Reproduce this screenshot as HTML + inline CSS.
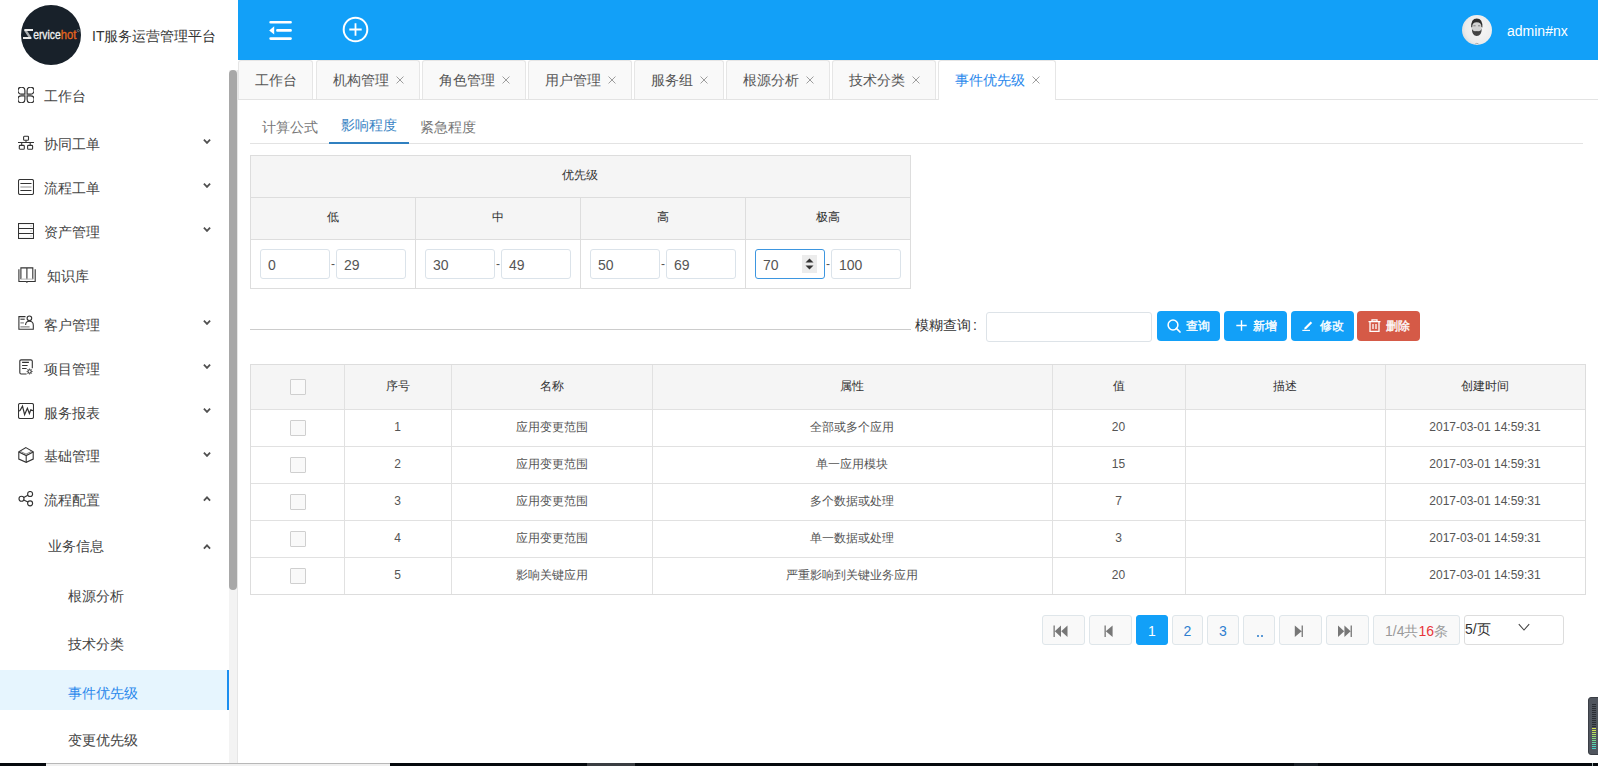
<!DOCTYPE html>
<html><head><meta charset="utf-8">
<style>
*{box-sizing:border-box;margin:0;padding:0}
html,body{width:1598px;height:766px;overflow:hidden;background:#fff;font-family:"Liberation Sans",sans-serif;color:#333}
.a{position:absolute;white-space:nowrap}
#side{position:absolute;left:0;top:0;width:238px;height:766px;background:#fff}
#hdr{position:absolute;left:238px;top:0;width:1360px;height:60px;background:#12a0f8}
.mi{position:absolute;font-size:14px;line-height:14px;color:#444;white-space:nowrap}
.ic{position:absolute;left:18px;width:16px;height:16px}
.chev{position:absolute;left:203px;width:8px;height:6px}
.tab{position:absolute;top:60px;height:39px;background:#f9f9f9;border:1px solid #e6e6e6;border-bottom:none;border-radius:3px 3px 0 0;font-size:14px;line-height:14px;color:#555}
.tab span{position:absolute;top:12px}
.tab .x{position:absolute;top:15px;width:8px;height:8px}
.t12{position:absolute;font-size:12px;line-height:12px;color:#333;white-space:nowrap}
.inp{position:absolute;top:249px;width:70px;height:30px;border:1px solid #dbe3ea;border-radius:3px;background:#fff}
.inp b{position:absolute;left:7px;top:8px;font-weight:normal;font-size:14px;line-height:14px;color:#555}
.dash{position:absolute;top:257px;font-size:12px;line-height:14px;color:#555}
.btn{position:absolute;top:311px;width:63px;height:30px;background:#12a0f8;border-radius:4px;color:#fff;font-size:12px;font-weight:normal;-webkit-text-stroke:0.35px #fff}
.btn span{position:absolute;top:9px;line-height:12px;margin-left:1px}
.hl{position:absolute;left:251px;width:1334px;height:1px;background:#e1e1e1}
.vl{position:absolute;top:365px;width:1px;height:229px;background:#e1e1e1}
.cb{position:absolute;left:290px;width:16px;height:16px;border:1px solid #cfcfcf;background:#f9f9f9;border-radius:1px}
.th{position:absolute;top:380px;font-size:12px;line-height:12px;text-align:center;color:#333}
.td{position:absolute;font-size:12px;line-height:35px;height:37px;text-align:center;color:#555}
.pg{position:absolute;top:615px;height:30px;border:1px solid #dfe6ea;border-radius:3px;background:#f9f9f9;text-align:center;font-size:14px;line-height:30px;color:#555}
</style></head><body>
<div id="side">
  <div class="a" style="left:21px;top:5px;width:60px;height:60px;border-radius:50%;background:#18212a"></div>
  <svg class="a" style="left:22px;top:26px" width="60" height="16" viewBox="0 0 60 16">
    <path d="M2.4 3 H11 V4.9 H2.2 Z M1 11 H9.4 V13 H1 Z" fill="#ececec"/><path d="M2.3 4.9 H5.2 L9.2 11 H6.4 Z" fill="#a9adb0"/>
    <text x="11.2" y="13.2" font-family="Liberation Sans" font-size="13.5" fill="#f0f0f0" stroke="#f0f0f0" stroke-width="0.35" textLength="27.5" lengthAdjust="spacingAndGlyphs">ervice</text>
    <text x="38.8" y="13.2" font-family="Liberation Sans" font-size="13.5" fill="#e5661f" stroke="#e5661f" stroke-width="0.35" textLength="15.6" lengthAdjust="spacingAndGlyphs">hot</text>
    <circle cx="56.3" cy="4.6" r="1.1" fill="none" stroke="#9aa" stroke-width="0.5"/>
  </svg>
  <div class="mi" style="left:92px;top:29px;color:#333">IT服务运营管理平台</div>

  <!-- scrollbar -->
  <div class="a" style="left:229px;top:70px;width:9px;height:693px;background:#f3f3f3;border-right:1px solid #e6e6e6"></div>
  <div class="a" style="left:229px;top:70px;width:8px;height:520px;background:#a8a8a8;border-radius:4px"></div>

  <!-- menu -->
  <svg class="ic" style="top:87px" viewBox="0 0 16 16" fill="none" stroke="#333" stroke-width="1.2">
    <path d="M6.9 7.2 H3.4 A3.5 3.5 0 1 1 6.9 3.7 Z M9.1 7.2 H12.6 A3.5 3.5 0 1 0 9.1 3.7 Z M6.9 8.8 H3.4 A3.5 3.5 0 1 0 6.9 12.3 Z M9.1 8.8 H12.6 A3.5 3.5 0 1 1 9.1 12.3 Z"/>
  </svg>
  <div class="mi" style="left:44px;top:89px">工作台</div>

  <svg class="ic" style="top:135px" viewBox="0 0 16 16" fill="none" stroke="#333" stroke-width="1.1">
    <rect x="5.6" y="1.3" width="4.9" height="4" rx="0.8"/><rect x="1.3" y="10.4" width="5" height="3.8" rx="0.8"/><rect x="9.6" y="10.4" width="5" height="3.8" rx="0.8"/>
    <path d="M0 7.5 H16 M8 5.3 V7.5 M3.7 7.5 V10.4 M12.2 7.5 V10.4"/>
  </svg>
  <div class="mi" style="left:44px;top:137px">协同工单</div>
  <svg class="chev" style="top:138px" viewBox="0 0 8 6"><path d="M0.9 1.7 L4 4.9 L7.1 1.7" fill="none" stroke="#505050" stroke-width="1.8"/></svg>

  <svg class="ic" style="top:179px" viewBox="0 0 16 16" fill="none" stroke="#333" stroke-width="1.1">
    <rect x="0.5" y="0.5" width="15" height="15" rx="1.6"/><path d="M2.4 4.5 H13.5 M2.4 11.5 H13.5"/><path d="M2.4 8 H13.5" stroke="#999" stroke-width="1.1"/>
  </svg>
  <div class="mi" style="left:44px;top:181px">流程工单</div>
  <svg class="chev" style="top:182px" viewBox="0 0 8 6"><path d="M0.9 1.7 L4 4.9 L7.1 1.7" fill="none" stroke="#505050" stroke-width="1.8"/></svg>

  <svg class="ic" style="top:223px" viewBox="0 0 16 16" fill="none" stroke="#333" stroke-width="1.1">
    <rect x="0.5" y="0.5" width="15" height="15"/><path d="M0.5 5.5 H15.5 M0.5 10.5 H15.5"/>
    <path d="M13 2.4 V3.6 M13 7.4 V8.6 M13 12.4 V13.6" stroke="#999" stroke-width="1"/>
  </svg>
  <div class="mi" style="left:44px;top:225px">资产管理</div>
  <svg class="chev" style="top:226px" viewBox="0 0 8 6"><path d="M0.9 1.7 L4 4.9 L7.1 1.7" fill="none" stroke="#505050" stroke-width="1.8"/></svg>

  <svg class="ic" style="top:267px;width:19px" viewBox="0 0 19 16" fill="none" stroke="#333" stroke-width="1.1">
    <path d="M2.9 12.2 V0.85 H8.9 V12.2 M8.9 0.85 H14.8 V12.2" /><path d="M2.9 12.1 H14.8" stroke="#bbb"/>
    <path d="M0.9 2.3 V14.5 H8.3 L8.9 15.3 L9.5 14.5 H17.2 V2.3"/>
  </svg>
  <div class="mi" style="left:47px;top:269px">知识库</div>

  <svg class="ic" style="top:315px" viewBox="0 0 16 16" fill="none" stroke="#333" stroke-width="1.1">
    <path d="M7.5 1.6 H0.9 V14.3 H15.3 V10.2 Q15.3 6.2 11.4 6.2 Q7.6 6.2 7.6 10"/><circle cx="11.4" cy="3.3" r="2.3"/>
    <path d="M2.4 4.2 H6.7"/><path d="M2.4 7.9 H5.9 M2.4 11.8 H11.6" stroke="#888" stroke-width="1.2"/>
  </svg>
  <div class="mi" style="left:44px;top:318px">客户管理</div>
  <svg class="chev" style="top:319px" viewBox="0 0 8 6"><path d="M0.9 1.7 L4 4.9 L7.1 1.7" fill="none" stroke="#505050" stroke-width="1.8"/></svg>

  <svg class="ic" style="top:359px" viewBox="0 0 16 16" fill="none" stroke="#333" stroke-width="1.1">
    <path d="M8.6 14.95 H3.2 Q1.8 14.95 1.8 13.5 V2.3 Q1.8 0.85 3.2 0.85 H12.8 Q14.3 0.85 14.3 2.3 V9.3"/>
    <path d="M4.1 3.4 H10.9 M4.1 6.5 H9.6 M4.1 9.5 H8.6"/>
    <circle cx="11.6" cy="12.5" r="1.7"/><path d="M11.6 9.6 V10.3 M11.6 14.7 V15.4 M8.7 12.5 H9.4 M13.8 12.5 H14.5 M9.6 10.5 L10.1 11 M13.1 14 L13.6 14.5 M13.6 10.5 L13.1 11 M10.1 14 L9.6 14.5" stroke-width="1"/>
  </svg>
  <div class="mi" style="left:44px;top:362px">项目管理</div>
  <svg class="chev" style="top:363px" viewBox="0 0 8 6"><path d="M0.9 1.7 L4 4.9 L7.1 1.7" fill="none" stroke="#505050" stroke-width="1.8"/></svg>

  <svg class="ic" style="top:403px" viewBox="0 0 16 16" fill="none" stroke="#333" stroke-width="1.1">
    <rect x="0.5" y="0.5" width="15" height="15" rx="1.6"/><path d="M0.9 8 L2 7.6 L4.5 3.1 L6.6 11.6 L9.4 5.3 L11.4 10.5 L12.8 6.8 L15.2 7.8" stroke-width="1.2"/>
  </svg>
  <div class="mi" style="left:44px;top:406px">服务报表</div>
  <svg class="chev" style="top:407px" viewBox="0 0 8 6"><path d="M0.9 1.7 L4 4.9 L7.1 1.7" fill="none" stroke="#505050" stroke-width="1.8"/></svg>

  <svg class="ic" style="top:447px" viewBox="0 0 16 16" fill="none" stroke="#333" stroke-width="1.1">
    <path d="M7.9 0.6 L15.2 4.9 V12.1 L8.2 15.3 L0.8 12.1 V4.9 Z"/><path d="M0.8 4.9 L8.2 8.6 L15.2 4.9 M8.2 8.6 V15.3"/><path d="M2.2 4.3 L8 7.1 L13.8 4.3" stroke="#777" stroke-width="0.9"/>
  </svg>
  <div class="mi" style="left:44px;top:449px">基础管理</div>
  <svg class="chev" style="top:451px" viewBox="0 0 8 6"><path d="M0.9 1.7 L4 4.9 L7.1 1.7" fill="none" stroke="#505050" stroke-width="1.8"/></svg>

  <svg class="ic" style="top:491px" viewBox="0 0 16 16" fill="none" stroke="#333" stroke-width="1.15">
    <circle cx="12.1" cy="3" r="2.5"/><circle cx="3.5" cy="7.7" r="2.5"/><circle cx="12.1" cy="12.3" r="2.5"/>
    <path d="M5.7 6.5 L9.9 4.2 M5.7 8.9 L9.9 11.1"/>
  </svg>
  <div class="mi" style="left:44px;top:493px">流程配置</div>
  <svg class="chev" style="top:496px" viewBox="0 0 8 6"><path d="M0.9 4.6 L4 1.4 L7.1 4.6" fill="none" stroke="#505050" stroke-width="1.8"/></svg>

  <div class="mi" style="left:48px;top:539px">业务信息</div>
  <svg class="chev" style="top:544px" viewBox="0 0 8 6"><path d="M0.9 4.6 L4 1.4 L7.1 4.6" fill="none" stroke="#505050" stroke-width="1.8"/></svg>

  <div class="mi" style="left:68px;top:589px">根源分析</div>
  <div class="mi" style="left:68px;top:637px">技术分类</div>
  <div class="a" style="left:0;top:670px;width:229px;height:40px;background:#e6f5fe;border-right:2px solid #1a8ef0"></div>
  <div class="mi" style="left:68px;top:686px;color:#2a88ec">事件优先级</div>
  <div class="mi" style="left:68px;top:733px">变更优先级</div>
</div>
<div id="hdr">
  <svg class="a" style="left:31px;top:20px" width="24" height="21" viewBox="0 0 24 21">
    <g stroke="#fff" stroke-width="2.6" stroke-linecap="round">
      <path d="M1.6 2.2 H21.6 M8.4 10.4 H21.6 M1.6 18.6 H21.6"/>
    </g>
    <path d="M0.2 10.4 L5.2 6.2 V14.6 Z" fill="#fff"/>
  </svg>
  <svg class="a" style="left:104px;top:16px" width="27" height="27" viewBox="0 0 27 27">
    <circle cx="13.5" cy="13.5" r="11.8" fill="none" stroke="#fff" stroke-width="2"/>
    <path d="M7.3 13.5 H19.7 M13.5 7.3 V19.7" stroke="#fff" stroke-width="1.8"/>
  </svg>
  <svg class="a" style="left:1224px;top:15px" width="30" height="30" viewBox="0 0 30 30">
    <defs><filter id="bl" x="-50%" y="-50%" width="200%" height="200%"><feGaussianBlur stdDeviation="0.55"/></filter>
    <radialGradient id="ag" cx="0.6" cy="0.45" r="0.65"><stop offset="0" stop-color="#f6f6f6"/><stop offset="0.75" stop-color="#ececec"/><stop offset="1" stop-color="#d9d9d9"/></radialGradient>
    <clipPath id="ac"><circle cx="15" cy="15" r="15"/></clipPath></defs>
    <circle cx="15" cy="15" r="15" fill="url(#ag)"/>
    <g clip-path="url(#ac)" filter="url(#bl)">
      <ellipse cx="14.8" cy="12.5" rx="4.9" ry="6.6" fill="#d2d2d2"/>
      <path d="M9.2 12.5 Q8.8 3.6 14.8 3.5 Q20.8 3.6 20.4 12.5 L19.4 12 Q19.6 7.4 14.8 7.2 Q10 7.4 10.2 12 Z" fill="#2f2f2f"/>
      <path d="M9.8 13.2 Q10 21 14.8 21 Q19.6 21 19.8 13.2 Q18.8 16.6 14.8 16.4 Q10.8 16.6 9.8 13.2 Z" fill="#444"/>
      <path d="M12.6 16.8 Q14.8 15.6 17 16.8 Q14.8 17.8 12.6 16.8 Z" fill="#3a3a3a"/>
      <path d="M11.4 10.8 H13.6 M16 10.8 H18.2" stroke="#777" stroke-width="0.9"/>
      <path d="M13.2 29 Q14.8 27.5 16.6 29" stroke="#aaa" stroke-width="1" fill="none"/>
    </g>
  </svg>
  <div class="a" style="left:1269px;top:23px;font-size:14px;line-height:16px;color:#fff">admin#nx</div>
</div>

<!-- tabs -->
<div class="a" style="left:238px;top:99px;width:1360px;height:1px;background:#e3e3e3"></div>
<div class="tab" style="left:238px;width:75px"><span style="left:16px">工作台</span></div>
<div class="tab" style="left:316px;width:104px"><span style="left:16px">机构管理</span><svg class="x" style="left:79px" viewBox="0 0 9 9"><path d="M0.6 0.6 L8.4 8.4 M8.4 0.6 L0.6 8.4" stroke="#8c8c8c" stroke-width="0.95"/></svg></div>
<div class="tab" style="left:422px;width:104px"><span style="left:16px">角色管理</span><svg class="x" style="left:79px" viewBox="0 0 9 9"><path d="M0.6 0.6 L8.4 8.4 M8.4 0.6 L0.6 8.4" stroke="#8c8c8c" stroke-width="0.95"/></svg></div>
<div class="tab" style="left:528px;width:104px"><span style="left:16px">用户管理</span><svg class="x" style="left:79px" viewBox="0 0 9 9"><path d="M0.6 0.6 L8.4 8.4 M8.4 0.6 L0.6 8.4" stroke="#8c8c8c" stroke-width="0.95"/></svg></div>
<div class="tab" style="left:634px;width:90px"><span style="left:16px">服务组</span><svg class="x" style="left:65px" viewBox="0 0 9 9"><path d="M0.6 0.6 L8.4 8.4 M8.4 0.6 L0.6 8.4" stroke="#8c8c8c" stroke-width="0.95"/></svg></div>
<div class="tab" style="left:726px;width:104px"><span style="left:16px">根源分析</span><svg class="x" style="left:79px" viewBox="0 0 9 9"><path d="M0.6 0.6 L8.4 8.4 M8.4 0.6 L0.6 8.4" stroke="#8c8c8c" stroke-width="0.95"/></svg></div>
<div class="tab" style="left:832px;width:104px"><span style="left:16px">技术分类</span><svg class="x" style="left:79px" viewBox="0 0 9 9"><path d="M0.6 0.6 L8.4 8.4 M8.4 0.6 L0.6 8.4" stroke="#8c8c8c" stroke-width="0.95"/></svg></div>
<div class="tab" style="left:938px;width:118px;background:#fff;height:40px;color:#2a88ec"><span style="left:16px">事件优先级</span><svg class="x" style="left:93px" viewBox="0 0 9 9"><path d="M0.6 0.6 L8.4 8.4 M8.4 0.6 L0.6 8.4" stroke="#8c8c8c" stroke-width="0.95"/></svg></div>

<!-- sub tabs -->
<div class="a" style="left:250px;top:143px;width:1333px;height:1px;background:#e3e3e3"></div>
<div class="a" style="left:329px;top:142px;width:80px;height:2px;background:#3080c0"></div>
<div class="mi" style="left:262px;top:120px;color:#777">计算公式</div>
<div class="mi" style="left:341px;top:118px;color:#3a84c4">影响程度</div>
<div class="mi" style="left:420px;top:120px;color:#777">紧急程度</div>
<!-- priority table -->
<div class="a" style="left:250px;top:155px;width:661px;height:134px;border:1px solid #ddd;background:#fff"></div>
<div class="a" style="left:251px;top:156px;width:659px;height:83px;background:#f5f5f5"></div>
<div class="a" style="left:251px;top:197px;width:659px;height:1px;background:#ddd"></div>
<div class="a" style="left:251px;top:239px;width:659px;height:1px;background:#ddd"></div>
<div class="a" style="left:415px;top:197px;width:1px;height:91px;background:#ddd"></div>
<div class="a" style="left:580px;top:197px;width:1px;height:91px;background:#ddd"></div>
<div class="a" style="left:745px;top:197px;width:1px;height:91px;background:#ddd"></div>
<div class="t12" style="left:562px;top:169px">优先级</div>
<div class="t12" style="left:327px;top:211px">低</div>
<div class="t12" style="left:492px;top:211px">中</div>
<div class="t12" style="left:657px;top:211px">高</div>
<div class="t12" style="left:816px;top:211px">极高</div>

<div class="inp" style="left:260px"><b>0</b></div><div class="dash" style="left:331px">-</div><div class="inp" style="left:336px"><b>29</b></div>
<div class="inp" style="left:425px"><b>30</b></div><div class="dash" style="left:496px">-</div><div class="inp" style="left:501px"><b>49</b></div>
<div class="inp" style="left:590px"><b>50</b></div><div class="dash" style="left:661px">-</div><div class="inp" style="left:666px"><b>69</b></div>
<div class="inp" style="left:755px;border-color:#3d96e0"><b>70</b>
  <svg class="a" style="left:46px;top:5px" width="15" height="18" viewBox="0 0 15 18"><rect width="15" height="18" fill="#ececec"/><path d="M3.5 7.5 L7.5 3.5 L11.5 7.5 Z M3.5 10.5 L7.5 14.5 L11.5 10.5 Z" fill="#333"/></svg>
</div><div class="dash" style="left:826px">-</div><div class="inp" style="left:831px"><b>100</b></div>

<!-- search row -->
<div class="a" style="left:250px;top:329px;width:661px;height:1px;background:#ccc"></div>
<div class="mi" style="left:915px;top:318px;color:#333">模糊查询<span style="margin-left:2px">:</span></div>
<div class="a" style="left:986px;top:312px;width:166px;height:30px;border:1px solid #dde3e8;border-radius:3px;background:#fff"></div>
<div class="btn" style="left:1157px"><svg class="a" style="left:10px;top:8px" width="15" height="14" viewBox="0 0 15 14"><circle cx="6" cy="6" r="4.9" fill="none" stroke="#fff" stroke-width="1.5"/><path d="M9.4 9.4 L13 13" stroke="#fff" stroke-width="1.7" stroke-linecap="round"/></svg><span style="left:28px">查询</span></div>
<div class="btn" style="left:1224px"><svg class="a" style="left:12px;top:9px" width="11" height="11" viewBox="0 0 11 11"><path d="M5.5 0.3 V10.7 M0.3 5.5 H10.7" stroke="#fff" stroke-width="1.4"/></svg><span style="left:28px">新增</span></div>
<div class="btn" style="left:1291px"><svg class="a" style="left:11px;top:8px" width="12" height="12" viewBox="0 0 12 12"><path d="M2.6 8.6 L8.6 2.4 L10.2 4 L4.2 10 L2.2 10.4 Z" fill="#fff"/><path d="M0.3 11.4 H8" stroke="#fff" stroke-width="1.1"/></svg><span style="left:28px">修改</span></div>
<div class="btn" style="left:1357px;background:#d55a47"><svg class="a" style="left:11px;top:8px" width="13" height="13" viewBox="0 0 13 13" fill="none" stroke="#fff" stroke-width="1.3"><path d="M0.5 2.6 H12.5 M4 2.6 V0.8 H9 V2.6 M2 2.6 V12.3 H11 V2.6 M5 5 V10 M8 5 V10"/></svg><span style="left:28px">删除</span></div>

<!-- data table -->
<div class="a" style="left:250px;top:364px;width:1336px;height:231px;border:1px solid #ddd;background:#fff"></div>
<div class="a" style="left:251px;top:365px;width:1334px;height:44px;background:#f5f5f5"></div>
<div class="hl" style="top:409px"></div>
<div class="hl" style="top:446px"></div>
<div class="hl" style="top:483px"></div>
<div class="hl" style="top:520px"></div>
<div class="hl" style="top:557px"></div>
<div class="vl" style="left:344px"></div>
<div class="vl" style="left:451px"></div>
<div class="vl" style="left:652px"></div>
<div class="vl" style="left:1052px"></div>
<div class="vl" style="left:1185px"></div>
<div class="vl" style="left:1385px"></div>

<div class="cb" style="top:379px"></div>
<div class="th" style="left:344px;width:107px">序号</div>
<div class="th" style="left:451px;width:201px">名称</div>
<div class="th" style="left:652px;width:400px">属性</div>
<div class="th" style="left:1052px;width:133px">值</div>
<div class="th" style="left:1185px;width:200px">描述</div>
<div class="th" style="left:1385px;width:200px">创建时间</div>

<div class="cb" style="top:420px"></div>
<div class="cb" style="top:457px"></div>
<div class="cb" style="top:494px"></div>
<div class="cb" style="top:531px"></div>
<div class="cb" style="top:568px"></div>
<div class="td" style="top:410px;left:344px;width:107px">1</div>
<div class="td" style="top:410px;left:451px;width:201px">应用变更范围</div>
<div class="td" style="top:410px;left:652px;width:400px">全部或多个应用</div>
<div class="td" style="top:410px;left:1052px;width:133px">20</div>
<div class="td" style="top:410px;left:1385px;width:200px">2017-03-01 14:59:31</div>
<div class="td" style="top:447px;left:344px;width:107px">2</div>
<div class="td" style="top:447px;left:451px;width:201px">应用变更范围</div>
<div class="td" style="top:447px;left:652px;width:400px">单一应用模块</div>
<div class="td" style="top:447px;left:1052px;width:133px">15</div>
<div class="td" style="top:447px;left:1385px;width:200px">2017-03-01 14:59:31</div>
<div class="td" style="top:484px;left:344px;width:107px">3</div>
<div class="td" style="top:484px;left:451px;width:201px">应用变更范围</div>
<div class="td" style="top:484px;left:652px;width:400px">多个数据或处理</div>
<div class="td" style="top:484px;left:1052px;width:133px">7</div>
<div class="td" style="top:484px;left:1385px;width:200px">2017-03-01 14:59:31</div>
<div class="td" style="top:521px;left:344px;width:107px">4</div>
<div class="td" style="top:521px;left:451px;width:201px">应用变更范围</div>
<div class="td" style="top:521px;left:652px;width:400px">单一数据或处理</div>
<div class="td" style="top:521px;left:1052px;width:133px">3</div>
<div class="td" style="top:521px;left:1385px;width:200px">2017-03-01 14:59:31</div>
<div class="td" style="top:558px;left:344px;width:107px">5</div>
<div class="td" style="top:558px;left:451px;width:201px">影响关键应用</div>
<div class="td" style="top:558px;left:652px;width:400px">严重影响到关键业务应用</div>
<div class="td" style="top:558px;left:1052px;width:133px">20</div>
<div class="td" style="top:558px;left:1385px;width:200px">2017-03-01 14:59:31</div>
<!-- pagination -->
<div class="pg" style="left:1042px;width:43px"><svg class="a" style="left:10px;top:9px" width="16" height="13" viewBox="0 0 16 13"><path d="M0.5 0.5 H1.8 V12 H0.5 Z M8 0.5 V12 L1.8 6.25 Z M14.5 0.5 V12 L8.2 6.25 Z" fill="#777"/></svg></div>
<div class="pg" style="left:1089px;width:43px"><svg class="a" style="left:14px;top:9px" width="10" height="13" viewBox="0 0 10 13"><path d="M0.5 0.5 H1.8 V12 H0.5 Z M8.6 0.5 V12 L1.8 6.25 Z" fill="#777"/></svg></div>
<div class="pg" style="left:1136px;width:32px;background:#12a0f8;border-color:#12a0f8;color:#fff">1</div>
<div class="pg" style="left:1172px;width:31px;color:#2f7fd0">2</div>
<div class="pg" style="left:1207px;width:32px;color:#2f7fd0">3</div>
<div class="pg" style="left:1243px;width:32px"><div class="a" style="left:13px;top:19px;width:2px;height:1.5px;background:#5c9ad6"></div><div class="a" style="left:17px;top:19px;width:2px;height:1.5px;background:#5c9ad6"></div></div>
<div class="pg" style="left:1279px;width:43px"><svg class="a" style="left:14px;top:9px" width="10" height="13" viewBox="0 0 10 13"><path d="M0.8 0.5 V12 L7.6 6.25 Z M7.6 0.5 H8.9 V12 H7.6 Z" fill="#777"/></svg></div>
<div class="pg" style="left:1326px;width:43px"><svg class="a" style="left:10px;top:9px" width="16" height="13" viewBox="0 0 16 13"><path d="M1 0.5 V12 L7.2 6.25 Z M7.4 0.5 V12 L13.6 6.25 Z M13.6 0.5 H14.9 V12 H13.6 Z" fill="#777"/></svg></div>
<div class="pg" style="left:1373px;width:87px;color:#999">1/4共<span style="color:#e8363b">16</span>条</div>
<div class="a" style="left:1464px;top:615px;width:100px;height:30px;border:1px solid #ddd;border-radius:3px;background:#fff"></div>
<div class="mi" style="left:1465px;top:622px;color:#333">5/页</div>
<svg class="a" style="left:1518px;top:623px" width="12" height="9" viewBox="0 0 12 9"><path d="M0.8 1.2 L6 7 L11.2 1.2" fill="none" stroke="#444" stroke-width="1.1"/></svg>

<!-- bottom strip -->
<div class="a" style="left:0;top:763px;width:1598px;height:3px;background:#05090d"></div>
<div class="a" style="left:46px;top:763px;width:344px;height:3px;background:#f0f0f0;border-top:1px solid #b8b8b8"></div>
<div class="a" style="left:587px;top:763px;width:48px;height:3px;background:#3a3d41"></div>
<div class="a" style="left:1294px;top:763px;width:24px;height:3px;background:#1a2026"></div>
<div class="a" style="left:1592px;top:763px;width:1px;height:3px;background:#9aa"></div>

<!-- right widget -->
<div class="a" style="left:1588px;top:697px;width:12px;height:58px;background:#50555e;border-radius:3px 0 0 3px;border:1px solid #3a3e45"></div>
<div class="a" style="left:1592px;top:704px;width:4px;height:1px;background:#2a2d33"></div>
<div class="a" style="left:1592px;top:706px;width:4px;height:1px;background:#2a2d33"></div>
<div class="a" style="left:1592px;top:708px;width:4px;height:1px;background:#2a2d33"></div>
<div class="a" style="left:1592px;top:710px;width:4px;height:1px;background:#2a2d33"></div>
<div class="a" style="left:1592px;top:712px;width:4px;height:1px;background:#2a2d33"></div>
<div class="a" style="left:1592px;top:714px;width:4px;height:1px;background:#2a2d33"></div>
<div class="a" style="left:1592px;top:716px;width:4px;height:1px;background:#2a2d33"></div>
<div class="a" style="left:1592px;top:718px;width:4px;height:1px;background:#2a2d33"></div>
<div class="a" style="left:1592px;top:720px;width:4px;height:1px;background:#2a2d33"></div>
<div class="a" style="left:1592px;top:722px;width:4px;height:1px;background:#2a2d33"></div>
<div class="a" style="left:1592px;top:724px;width:4px;height:1px;background:#2a2d33"></div>
<div class="a" style="left:1592px;top:726px;width:4px;height:1px;background:#2a2d33"></div>
<div class="a" style="left:1592px;top:728px;width:4px;height:1px;background:#d8e34a"></div>
<div class="a" style="left:1592px;top:730px;width:4px;height:1px;background:#cde352"></div>
<div class="a" style="left:1592px;top:732px;width:4px;height:1px;background:#bfe35c"></div>
<div class="a" style="left:1592px;top:734px;width:4px;height:1px;background:#ade366"></div>
<div class="a" style="left:1592px;top:736px;width:4px;height:1px;background:#98e070"></div>
<div class="a" style="left:1592px;top:738px;width:4px;height:1px;background:#84dd80"></div>
<div class="a" style="left:1592px;top:740px;width:4px;height:1px;background:#72da90"></div>
<div class="a" style="left:1592px;top:742px;width:4px;height:1px;background:#62d8a0"></div>
<div class="a" style="left:1592px;top:744px;width:4px;height:1px;background:#55d6b0"></div>
<div class="a" style="left:1592px;top:746px;width:4px;height:1px;background:#4cd4bd"></div>
<div class="a" style="left:1592px;top:748px;width:4px;height:1px;background:#45d2c6"></div>
</body></html>
